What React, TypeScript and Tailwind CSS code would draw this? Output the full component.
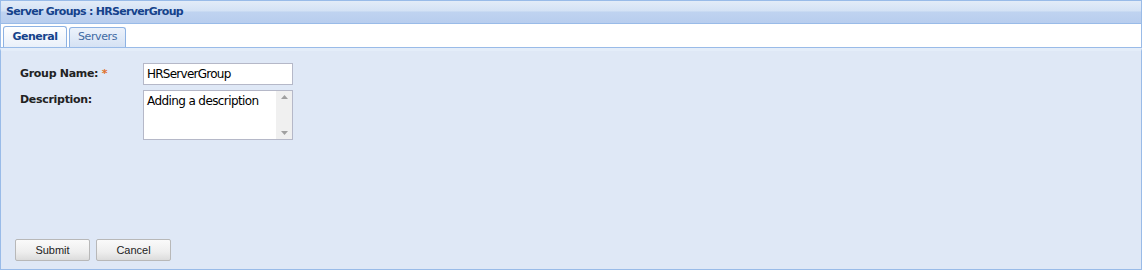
import React from "react";

export default function App() {
  const tahoma = { fontFamily: '"DejaVu Sans", Verdana, sans-serif' };
  return (
    <div className="w-[1142px] h-[270px] flex flex-col bg-white overflow-hidden" style={tahoma}>
      {/* Title bar */}
      <div className="h-[24px] flex items-center pl-[5px] border-b border-[#99bbe8] bg-[linear-gradient(to_bottom,#e3ecf8_0%,#d4e2f5_45%,#bfd3f0_50%,#b8cdee_100%)] border-x border-t border-x-[#99bbe8] border-t-[#99bbe8]">
        <span className="text-[11px] font-bold text-[#15428b] tracking-[-0.7px]">Server Groups : HRServerGroup</span>
      </div>
      {/* Tab strip */}
      <div className="h-[24px] flex items-end pl-[2px] gap-[2px] bg-white border-x border-[#99bbe8] border-b border-b-[#99bbe8]">
        <div className="h-[21px] w-[64px] flex items-center justify-center rounded-t-[3px] border border-b-0 border-[#8db2e3] bg-[linear-gradient(to_bottom,#ffffff,#e9f0fa)]">
          <span className="text-[11px] font-bold text-[#15428b] tracking-[-0.5px]">General</span>
        </div>
        <div className="h-[20px] w-[57px] flex items-center justify-center rounded-t-[3px] border border-b-0 border-[#8db2e3] bg-[linear-gradient(to_bottom,#ecf2fb,#d5e2f4)]">
          <span className="text-[11px] text-[#416aa3] tracking-[-0.4px]">Servers</span>
        </div>
      </div>
      {/* Body */}
      <div className="flex-1 flex flex-col justify-between bg-[#dfe8f6] border-x border-b border-[#99bbe8] border-t-[3px] border-t-[#e4edf9] pt-[12px] pl-[14px] pb-[8px]">
        <div className="flex flex-col gap-[5px] pl-[5px]">
          <div className="flex items-center">
            <div className="w-[123px] text-[11px] font-bold text-[#222] tracking-[-0.3px]">
              Group Name: <span className="text-[#e0702a]">*</span>
            </div>
            <div className="w-[150px] h-[22px] border border-[#b5b8c8] bg-white flex items-center pl-[3px]">
              <span className="text-[12px] text-[#000] tracking-[-0.75px]">HRServerGroup</span>
            </div>
          </div>
          <div className="flex items-start">
            <div className="w-[123px] pt-[2px] text-[11px] font-bold text-[#222] tracking-[-0.3px]">Description:</div>
            <div className="w-[150px] h-[50px] border border-[#b5b8c8] bg-white flex">
              <div className="flex-1 pl-[3px] pt-[1px] text-[12px] text-[#000] tracking-[-0.6px]">Adding a description</div>
              <div className="w-[16px] bg-[#f0f0f0] flex flex-col items-center justify-between py-[4px]">
                <svg width="7" height="4" viewBox="0 0 7 4"><path d="M0 4 L3.5 0 L7 4 Z" fill="#a0a0a0" /></svg>
                <svg width="7" height="4" viewBox="0 0 7 4"><path d="M0 0 L3.5 4 L7 0 Z" fill="#a0a0a0" /></svg>
              </div>
            </div>
          </div>
        </div>
        <div className="flex gap-[6px]">
          {["Submit", "Cancel"].map((t) => (
            <div
              key={t}
              className="w-[75px] h-[22px] flex items-center justify-center rounded-[2px] border border-[#b8b8b8] bg-[linear-gradient(to_bottom,#fafafa_0%,#eeeeee_60%,#dcdcdc_100%)]"
            >
              <span className="text-[11px] text-[#222]" style={{ fontFamily: '"Liberation Sans", Arial, sans-serif' }}>{t}</span>
            </div>
          ))}
        </div>
      </div>
    </div>
  );
}
